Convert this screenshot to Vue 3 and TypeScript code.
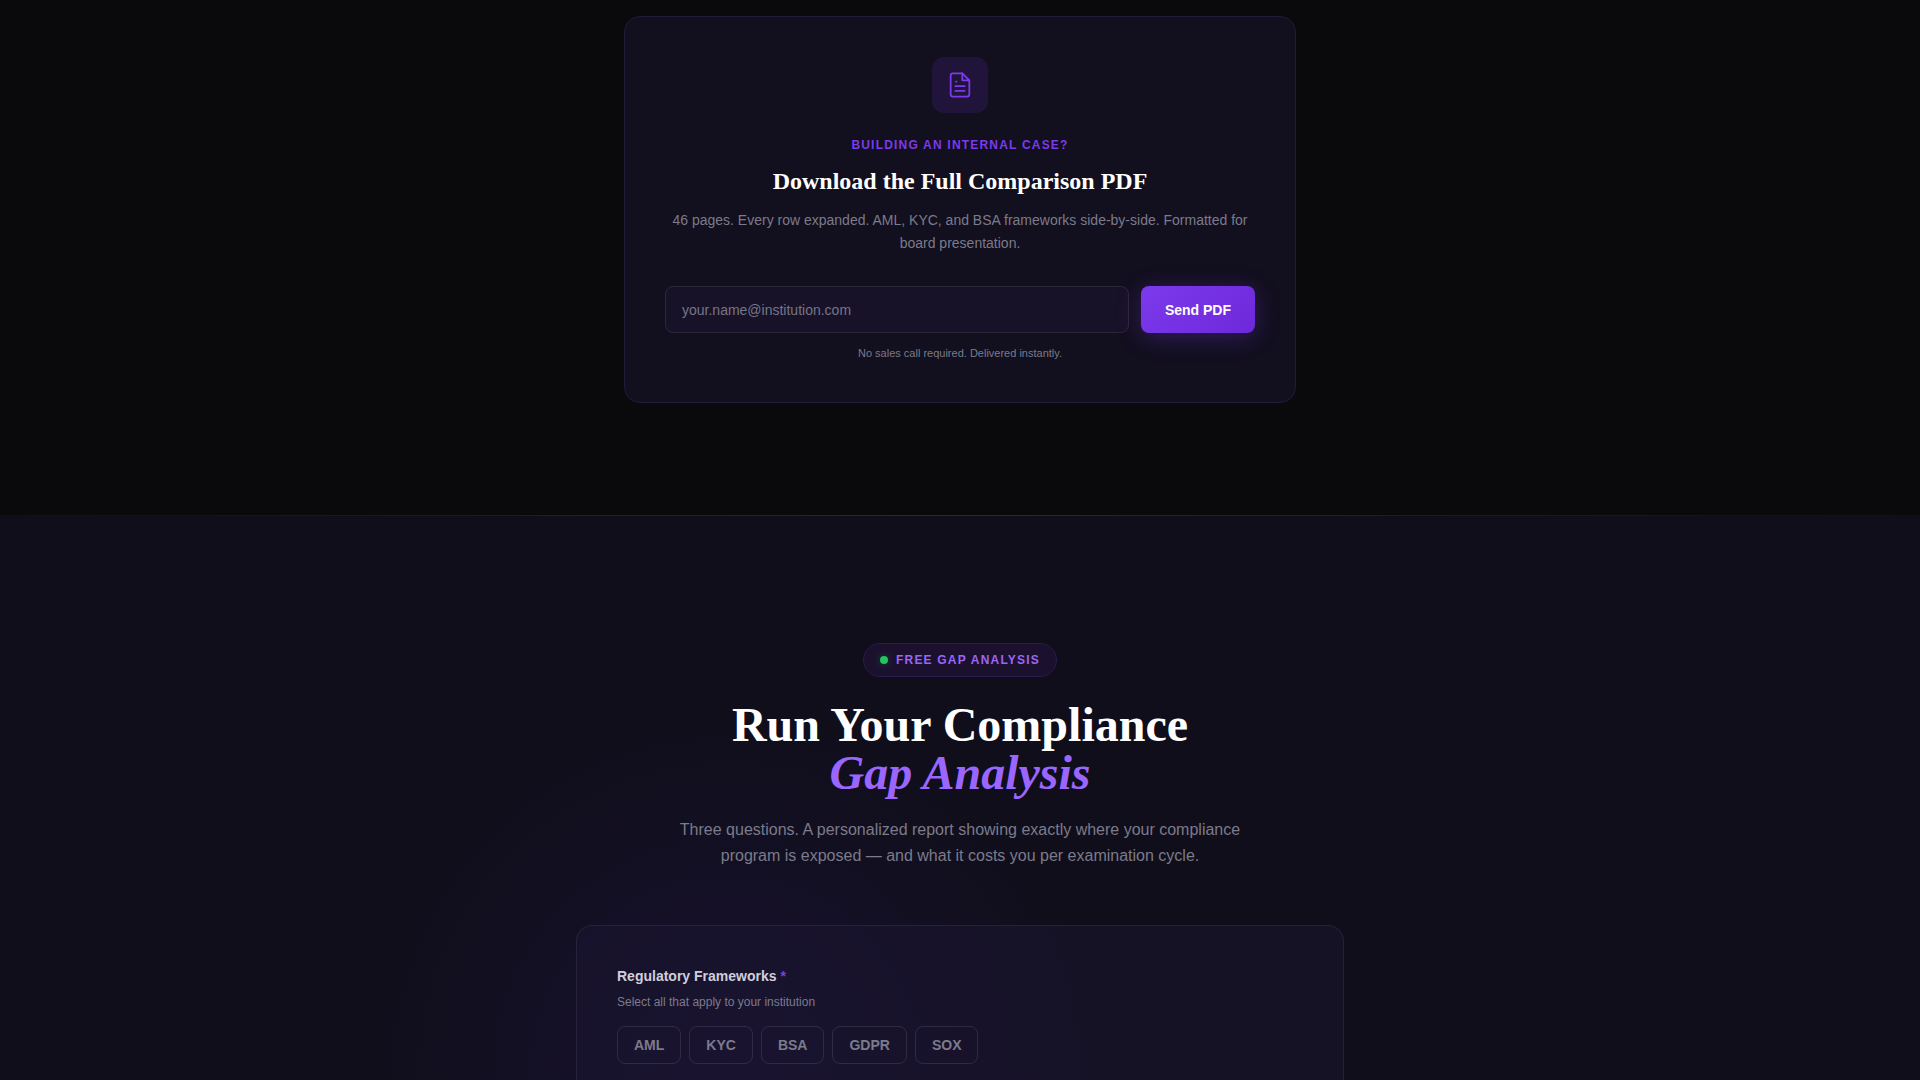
<script setup lang="ts">
import { ref } from 'vue'

const email = ref('')
const frameworks = ['AML', 'KYC', 'BSA', 'GDPR', 'SOX']
const selected = ref<string[]>([])

function toggle(name: string): void {
  selected.value = selected.value.includes(name)
    ? selected.value.filter((item) => item !== name)
    : [...selected.value, name]
}
</script>

<template>
  <main class="page">
    <section class="download">
      <div class="download-card">
        <div class="icon-tile">
          <svg width="28" height="28" viewBox="0 0 24 24" fill="none" stroke="currentColor" stroke-width="1.5" stroke-linecap="round" stroke-linejoin="round" aria-hidden="true">
            <path d="M14 2H6a2 2 0 0 0-2 2v16a2 2 0 0 0 2 2h12a2 2 0 0 0 2-2V8z" />
            <path d="M14 2v6h6" />
            <path d="M16 13H8" />
            <path d="M16 17H8" />
            <path d="M9 9H8.6" />
          </svg>
        </div>
        <p class="eyebrow">BUILDING AN INTERNAL CASE?</p>
        <h3 class="download-title">Download the Full Comparison PDF</h3>
        <p class="download-text">
          46 pages. Every row expanded. AML, KYC, and BSA frameworks side-by-side. Formatted for board presentation.
        </p>
        <form class="email-form" @submit.prevent>
          <input v-model="email" class="email" type="email" aria-label="Work email" placeholder="your.name@institution.com" />
          <button class="send" type="submit">Send PDF</button>
        </form>
        <p class="note">No sales call required. Delivered instantly.</p>
      </div>
    </section>

    <section class="analysis">
      <div class="glow" aria-hidden="true"></div>
      <div class="analysis-inner">
        <div class="badge"><span class="dot"></span>FREE GAP ANALYSIS</div>
        <h2 class="heading">Run Your Compliance<br /><em>Gap Analysis</em></h2>
        <p class="lead">
          Three questions. A personalized report showing exactly where your compliance program is exposed — and what it costs you per examination cycle.
        </p>
        <form class="analysis-card" @submit.prevent>
          <div role="group" aria-labelledby="frameworks-label" aria-describedby="frameworks-hint">
            <p id="frameworks-label" class="field-label">Regulatory Frameworks <span class="required">*</span></p>
            <p id="frameworks-hint" class="hint">Select all that apply to your institution</p>
            <div class="chips">
              <button
                v-for="name in frameworks"
                :key="name"
                type="button"
                class="chip"
                :class="{ active: selected.includes(name) }"
                :aria-pressed="selected.includes(name)"
                @click="toggle(name)"
              >
                {{ name }}
              </button>
            </div>
          </div>
        </form>
      </div>
    </section>
  </main>
</template>

<style>
body {
  margin: 0;
  background: #0a0a0d;
}
</style>

<style scoped>
.page {
  height: 100vh;
  overflow: hidden;
  background: #0a0a0d;
  font-family: "Liberation Sans", Arial, sans-serif;
  color: #fff;
}

.page *,
.page *::before {
  box-sizing: border-box;
}

p,
h2,
h3 {
  margin: 0;
}

.download {
  padding: 16px 24px 112px;
}

.download-card {
  max-width: 672px;
  margin: 0 auto;
  padding: 40px;
  border: 1px solid #211c3b;
  border-radius: 16px;
  background: #120f1e;
  text-align: center;
}

.icon-tile {
  display: flex;
  align-items: center;
  justify-content: center;
  width: 56px;
  height: 56px;
  margin: 0 auto 24px;
  border-radius: 12px;
  background: #21143b;
  color: #7c3aed;
}

.eyebrow {
  margin-bottom: 12px;
  font-size: 12px;
  font-weight: 700;
  line-height: 16px;
  letter-spacing: 1.2px;
  color: #7c3aed;
}

.download-title {
  margin-bottom: 12px;
  font-family: "Liberation Serif", "Times New Roman", serif;
  font-size: 24px;
  font-weight: 700;
  line-height: 32px;
}

.download-text {
  margin-bottom: 31px;
  font-size: 14px;
  line-height: 23px;
  color: #7b7b8b;
}

.email-form {
  display: flex;
  gap: 12px;
}

.email {
  flex: 1;
  min-width: 0;
  height: 47px;
  padding: 0 16px;
  border: 1px solid #2d2838;
  border-radius: 8px;
  background: #181228;
  color: #fff;
  font-family: inherit;
  font-size: 14px;
  outline: none;
}

.email::placeholder {
  color: #757587;
  opacity: 1;
}

.send {
  height: 47px;
  padding: 0 24px;
  border: 0;
  border-radius: 8px;
  background: linear-gradient(135deg, #7c3aed, #6d28d9);
  box-shadow: 0 4px 24px rgba(124, 58, 237, 0.3);
  color: #fff;
  font-family: inherit;
  font-size: 14px;
  font-weight: 700;
}

.note {
  margin-top: 12px;
  font-size: 11px;
  line-height: 17px;
  color: #7b7b8b;
}

.analysis {
  position: relative;
  padding: 128px 24px;
  background: #100e1a;
}

.analysis::before {
  content: "";
  position: absolute;
  top: 0;
  left: 0;
  right: 0;
  height: 1px;
  background: linear-gradient(90deg, transparent, #2b2152, transparent);
}

.glow {
  position: absolute;
  top: 180px;
  left: 50%;
  width: 760px;
  height: 760px;
  margin-left: -610px;
  border-radius: 50%;
  background: radial-gradient(circle closest-side, rgba(76, 40, 200, 0.12), rgba(76, 40, 200, 0));
}

.analysis-inner {
  position: relative;
  max-width: 768px;
  margin: 0 auto;
  text-align: center;
}

.badge {
  display: flex;
  align-items: center;
  gap: 8px;
  width: fit-content;
  height: 34px;
  margin: 0 auto 24px;
  padding: 0 16px;
  border: 1px solid #2a1c4c;
  border-radius: 17px;
  background: #1b112e;
  color: #9b66f5;
  font-size: 12px;
  font-weight: 700;
  letter-spacing: 1.2px;
}

.dot {
  width: 8px;
  height: 8px;
  border-radius: 50%;
  background: #22c55e;
  box-shadow: 0 0 8px rgba(34, 197, 94, 0.3);
}

.heading {
  margin-bottom: 20px;
  font-family: "Liberation Serif", "Times New Roman", serif;
  font-size: 48px;
  font-weight: 700;
  line-height: 48px;
}

.heading em {
  color: #9b66ff;
}

.lead {
  max-width: 576px;
  margin: 0 auto 56px;
  font-size: 16px;
  line-height: 26px;
  color: #7b7b8b;
}

.analysis-card {
  padding: 40px;
  border: 1px solid rgba(255, 255, 255, 0.07);
  border-radius: 16px;
  background: rgba(27, 21, 50, 0.5);
  text-align: left;
}

.field-label {
  margin-bottom: 8px;
  font-size: 14px;
  font-weight: 700;
  line-height: 20px;
  color: #d0cedd;
}

.required {
  color: #7c3aed;
}

.hint {
  margin-bottom: 16px;
  font-size: 12px;
  line-height: 16px;
  color: #7b7b8b;
}

.chips {
  display: flex;
  flex-wrap: wrap;
  gap: 8px;
}

.chip {
  height: 38px;
  padding: 0 16px;
  border: 1px solid rgba(255, 255, 255, 0.1);
  border-radius: 8px;
  background: transparent;
  color: #7b7b8b;
  font-family: inherit;
  font-size: 14px;
  font-weight: 700;
}

.chip.active {
  border-color: #7c3aed;
  color: #fff;
}
</style>
